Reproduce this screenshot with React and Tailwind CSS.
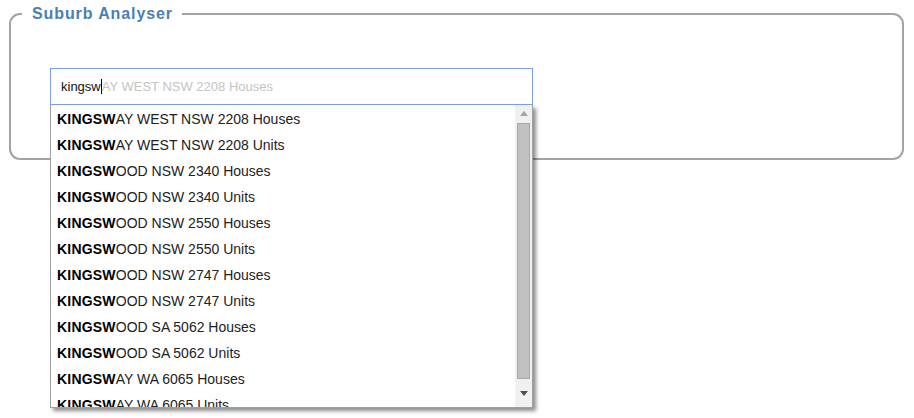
import React from 'react';

const items = [
  'AY WEST NSW 2208 Houses',
  'AY WEST NSW 2208 Units',
  'OOD NSW 2340 Houses',
  'OOD NSW 2340 Units',
  'OOD NSW 2550 Houses',
  'OOD NSW 2550 Units',
  'OOD NSW 2747 Houses',
  'OOD NSW 2747 Units',
  'OOD SA 5062 Houses',
  'OOD SA 5062 Units',
  'AY WA 6065 Houses',
  'AY WA 6065 Units',
  'AY WEST NSW 2208 Houses',
];

const App = () => {
  return (
    <div className="w-[914px] h-[418px] bg-white overflow-hidden" style={{ fontFamily: '"Liberation Sans", Arial, sans-serif' }}>
      <div className="pt-[5px] pl-[9px] pr-[10px]">
        <fieldset className="relative border-2 border-[#a3a3a3] rounded-[11px] h-[155px] px-0 m-0">
          <legend className="ml-[11px] pl-[10px] pr-[9px] text-[16px] font-bold text-[#4a80b4] tracking-[0.9px] leading-[18px]">
            Suburb Analyser
          </legend>
          <div className="mt-[45px] ml-[39px] relative w-[483px]">
            <div className="h-[37px] border border-[#7da3e6] flex items-center pl-[10px] text-[13px]">
              <span className="text-[#111]">kingsw</span>
              <span className="w-px h-[15px] bg-black"></span>
              <span className="text-[#c4c4c4]">AY WEST NSW 2208 Houses</span>
            </div>
            <div className="absolute left-0 top-[37px] w-[483px] h-[303px] bg-white border border-[#a0a0a0] border-t-0 shadow-[3px_3px_4px_rgba(0,0,0,0.45)] flex overflow-hidden z-10">
              <ul className="flex-1 overflow-hidden pt-px">
                {items.map((rest, i) => (
                  <li key={i} className="h-[26px] flex items-center pl-[6px] text-[14px] text-[#222] whitespace-nowrap">
                    <span className="font-bold text-black tracking-[0.2px]">KINGSW</span>
                    <span>{rest}</span>
                  </li>
                ))}
              </ul>
              <div className="w-[17px] bg-[#f0f0f0] flex flex-col items-center">
                <div className="h-[17px] flex items-center justify-center">
                  <svg width="8" height="5" viewBox="0 0 8 5"><path d="M4 0L8 5H0z" fill="#a3a3a3" /></svg>
                </div>
                <div className="w-[13px] h-[256px] bg-[#c1c1c1] border border-[#a8a8a8] mt-px"></div>
                <div className="flex-1 flex items-center justify-center">
                  <svg width="8" height="5" viewBox="0 0 8 5"><path d="M0 0H8L4 5z" fill="#505050" /></svg>
                </div>
              </div>
            </div>
          </div>
        </fieldset>
      </div>
    </div>
  );
};

export default App;
